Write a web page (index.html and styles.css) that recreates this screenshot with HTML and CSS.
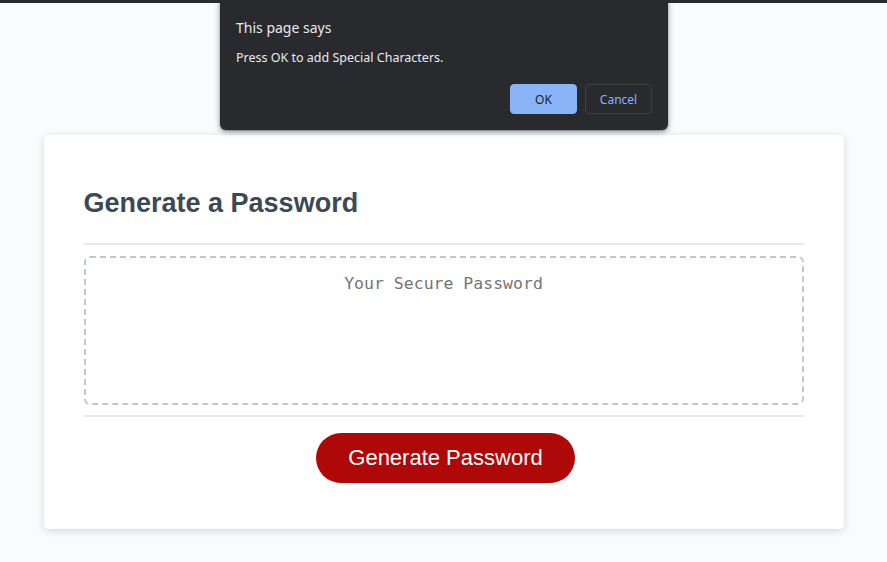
FILE: index.html
```html
<!DOCTYPE html>
<html lang="en">
<head>
<meta charset="utf-8">
<title>Password Generator</title>
<link rel="stylesheet" href="styles.css">
</head>
<body>
<div class="topbar"></div>
<div class="wrapper">
  <header class="header"></header>
  <div class="card">
    <div class="card-header">
      <h2>Generate a Password</h2>
    </div>
    <div class="card-body">
      <textarea class="password" readonly placeholder="Your Secure Password" aria-label="Generated Password"></textarea>
    </div>
    <div class="card-footer">
      <button class="btn">Generate Password</button>
    </div>
  </div>
</div>
<div class="dialog" role="alertdialog">
  <div class="dialog-title">This page says</div>
  <div class="dialog-msg">Press OK to add Special Characters.</div>
  <div class="dialog-actions">
    <button class="dbtn dbtn-ok">OK</button>
    <button class="dbtn dbtn-cancel">Cancel</button>
  </div>
</div>
</body>
</html>
```

FILE: styles.css
```css
*, *::before, *::after { box-sizing: border-box; }

html, body {
  margin: 0;
  padding: 0;
}

body {
  font-family: "Liberation Sans", Arial, sans-serif;
  background-color: #f9fbfd;
  min-height: 562px;
}

.topbar {
  height: 3px;
  background: #2b2c2f;
}

.wrapper {
  padding: 27px 20px 0;
}

.header {
  height: 105px;
}

.card {
  background-color: #fff;
  border-radius: 5px;
  box-shadow: rgba(0, 0, 0, 0.15) 0 2px 8px 0;
  color: hsl(206, 17%, 28%);
  font-size: 18px;
  margin: 0 auto;
  max-width: 800px;
  padding: 30px 40px;
}

.card-header h2 {
  margin: 23px 0 24px;
  font-size: 27px;
  line-height: 31px;
  font-weight: bold;
}

.card-header::after,
.card-footer::before {
  content: "";
  display: block;
  width: 100%;
  height: 2px;
  background: #e7e9eb;
}

.password {
  appearance: none;
  -webkit-appearance: none;
  display: block;
  width: 100%;
  height: 149px;
  margin: 11px 0 10px;
  padding: 15px 15px 0;
  border: 2px dashed #c0c7cf;
  border-radius: 6px;
  resize: none;
  overflow: hidden;
  font-family: "DejaVu Sans Mono", "Liberation Mono", monospace;
  font-size: 16.5px;
  line-height: 22px;
  text-align: center;
  color: #333;
  background: #fff;
  outline: none;
}

.password::placeholder {
  color: #757575;
}

.card-footer {
  text-align: center;
}

.btn {
  border: none;
  background-color: hsl(360, 91%, 36%);
  border-radius: 25px;
  color: #fff;
  display: inline-block;
  font-family: "Liberation Sans", Arial, sans-serif;
  font-size: 22px;
  line-height: 22px;
  height: 50px;
  margin: 16px 16px 16px 20px;
  padding: 14px 32px;
  cursor: pointer;
}

/* Browser alert dialog overlay */
.dialog {
  position: absolute;
  top: 0;
  left: 220px;
  width: 448px;
  height: 130px;
  background: #292a2d;
  border-radius: 0 0 6px 6px;
  box-shadow: 0 2px 6px rgba(0, 0, 0, 0.35), 0 1px 2px rgba(0, 0, 0, 0.3);
  padding: 18px 16px 16px;
  color: #e8eaed;
  font-family: "Noto Sans", "Open Sans", sans-serif;
  display: flex;
  flex-direction: column;
}

.dialog-title {
  font-size: 14px;
  line-height: 20px;
}

.dialog-msg {
  font-size: 12.5px;
  line-height: 18px;
  margin-top: 11px;
}

.dialog-actions {
  margin-top: auto;
  display: flex;
  justify-content: flex-end;
  gap: 8px;
}

.dbtn {
  width: 67px;
  height: 30px;
  border-radius: 4px;
  font-family: "Noto Sans", "Open Sans", sans-serif;
  font-size: 12px;
  padding: 0;
  cursor: pointer;
}

.dbtn-ok {
  background: #8ab4f8;
  border: 1px solid #8ab4f8;
  color: #202124;
}

.dbtn-cancel {
  background: transparent;
  border: 1px solid #3c4043;
  color: #8ab4f8;
}
```
